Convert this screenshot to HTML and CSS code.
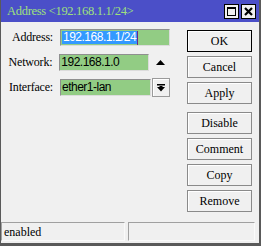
FILE: index.html
```html
<!DOCTYPE html>
<html>
<head>
<meta charset="utf-8">
<link rel="stylesheet" href="styles.css">
</head>
<body>
<div class="window">
  <div class="titlebar">
    <span class="title">Address &lt;192.168.1.1/24&gt;</span>
    <div class="tbtns">
      <span class="tbtn"><svg width="13" height="13" viewBox="0 0 13 13"><rect x="2.5" y="2.5" width="8" height="8" fill="none" stroke="#000" stroke-width="1"/><rect x="2" y="2" width="9" height="2" fill="#000"/></svg></span>
      <span class="tbtn"><svg width="13" height="13" viewBox="0 0 13 13"><path d="M3 3 L10 10 M10 3 L3 10" stroke="#000" stroke-width="2.2"/></svg></span>
    </div>
  </div>
  <div class="content">
    <div class="form">
      <div class="row">
        <span class="lbl">Address:</span>
        <div class="field wide"><span class="sel">192.168.1.1/24</span><span class="caret"></span></div>
      </div>
      <div class="row">
        <span class="lbl">Network:</span>
        <div class="field">192.168.1.0</div>
        <span class="updown"><svg width="9" height="5" viewBox="0 0 9 5"><polygon points="4.5,0 9,5 0,5" fill="#000"/></svg></span>
      </div>
      <div class="row">
        <span class="lbl">Interface:</span>
        <div class="field">ether1-lan</div>
        <span class="drop"><svg width="8" height="8" viewBox="0 0 8 8"><rect x="0" y="0" width="8" height="1.5" fill="#000"/><polygon points="0,3 8,3 4,7.5" fill="#000"/><rect x="2.5" y="2" width="3" height="2" fill="#000"/></svg></span>
      </div>
    </div>
    <div class="buttons">
      <div class="group">
        <span class="btn default">OK</span>
        <span class="btn">Cancel</span>
        <span class="btn">Apply</span>
      </div>
      <div class="group">
        <span class="btn">Disable</span>
        <span class="btn">Comment</span>
        <span class="btn">Copy</span>
        <span class="btn">Remove</span>
      </div>
    </div>
  </div>
  <div class="status">
    <div class="panel left">enabled</div>
    <div class="panel right"></div>
  </div>
</div>
</body>
</html>
```
FILE: styles.css
```css
html, body {
  margin: 0;
  padding: 0;
  background: #f0f0f0;
}
.window {
  width: 261px;
  height: 246px;
  box-sizing: border-box;
  border-left: 1px solid #5a5a5a;
  border-right: 2px solid #5a5a5a;
  border-bottom: 3px solid #5a5a5a;
  background: #f0f0f0;
  display: flex;
  flex-direction: column;
  font-family: "Liberation Serif", "DejaVu Serif", serif;
  font-size: 12px;
  color: #000;
}
.titlebar {
  height: 22px;
  flex: none;
  background: #4b4fc8;
  display: flex;
  align-items: center;
  justify-content: space-between;
  padding-left: 6px;
  padding-right: 3px;
}
.title {
  color: #9fe07c;
  font-size: 12.5px;
  letter-spacing: -0.3px;
}
.tbtns {
  display: flex;
  gap: 2px;
}
.tbtn {
  width: 13px;
  height: 13px;
  border: 1px solid #000;
  background: #f0f0f0;
  display: flex;
}
.content {
  flex: 1;
  display: flex;
  min-height: 0;
}
.form {
  width: 169px;
  padding-top: 7px;
  display: flex;
  flex-direction: column;
  gap: 8px;
}
.row {
  display: flex;
  align-items: center;
  height: 17px;
}
.lbl {
  width: 52px;
  margin-right: 7px;
  text-align: right;
  letter-spacing: -0.2px;
}
.field {
  width: 91px;
  height: 17px;
  box-sizing: border-box;
  background: #92cc84;
  border-top: 1px solid #8f8f8f;
  border-left: 1px solid #8f8f8f;
  border-right: 1px solid #dcdcdc;
  border-bottom: 1px solid #dcdcdc;
  font-family: "Liberation Sans", Arial, sans-serif;
  font-size: 12px;
  letter-spacing: -0.5px;
  line-height: 15px;
  padding-left: 1px;
  display: flex;
  align-items: center;
}
.field.wide {
  width: 110px;
}
.sel {
  background: #3399ff;
  color: #fff;
  height: 13px;
  line-height: 13px;
  padding: 0 1px;
}
.caret {
  width: 1px;
  height: 14px;
  background: #6b2a8a;
}
.updown {
  width: 19px;
  display: flex;
  justify-content: center;
  padding-left: 2px;
}
.drop {
  width: 16px;
  height: 17px;
  margin-left: 1px;
  border: 1px solid #9a9a9a;
  box-shadow: inset 1px 1px 0 #fff;
  background: #f0f0f0;
  display: flex;
  align-items: center;
  justify-content: center;
}
.buttons {
  margin-left: 17px;
  width: 65px;
  padding-top: 8px;
  display: flex;
  flex-direction: column;
  gap: 8px;
}
.group {
  display: flex;
  flex-direction: column;
  gap: 4px;
}
.btn {
  height: 22px;
  box-sizing: border-box;
  border: 1px solid #8a8a8a;
  box-shadow: inset 1px 1px 0 #fff;
  background: #f0f0f0;
  display: flex;
  align-items: center;
  justify-content: center;
}
.btn.default {
  border-color: #000;
}
.status {
  height: 21px;
  flex: none;
  display: flex;
  gap: 3px;
  padding-bottom: 2px;
  padding-right: 4px;
  box-sizing: border-box;
}
.panel {
  height: 19px;
  box-sizing: border-box;
  border-top: 1px solid #a0a0a0;
  border-left: 1px solid #a0a0a0;
  border-right: 1px solid #fafafa;
  border-bottom: 1px solid #fafafa;
  line-height: 18px;
  padding-left: 2px;
}
.panel.left {
  width: 124px;
}
.panel.right {
  flex: 1;
}
```
